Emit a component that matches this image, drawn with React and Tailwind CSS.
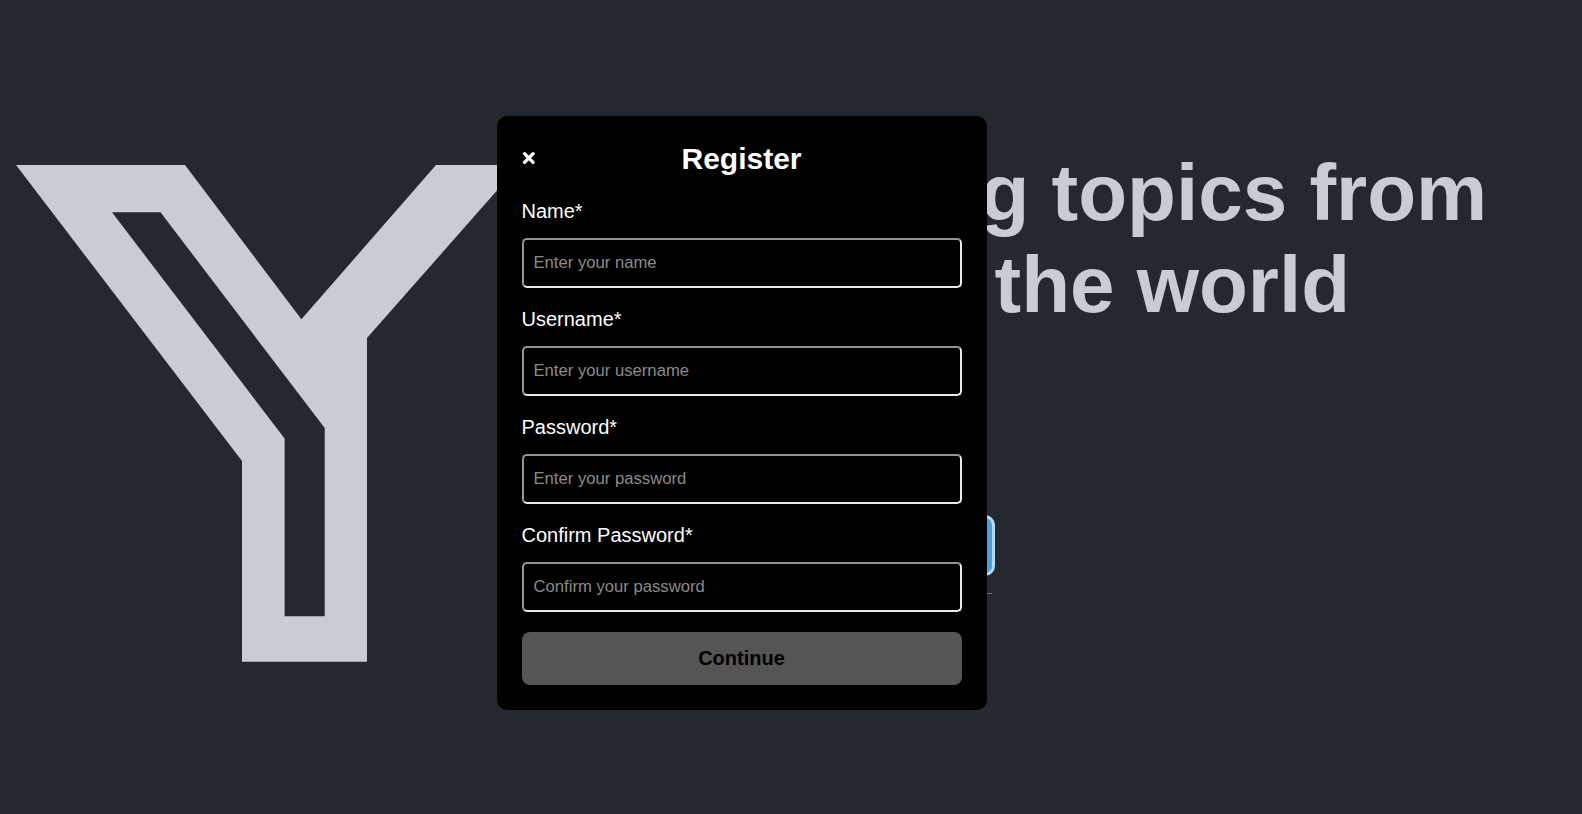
import React from "react";

const FIELDS = [
  { id: "name", label: "Name*", placeholder: "Enter your name", type: "text" },
  { id: "username", label: "Username*", placeholder: "Enter your username", type: "text" },
  { id: "password", label: "Password*", placeholder: "Enter your password", type: "password" },
  { id: "confirm", label: "Confirm Password*", placeholder: "Confirm your password", type: "password" },
];

function Logo() {
  return (
    <svg className="block h-[497px] w-[504px] shrink-0" viewBox="16 165 504 497" fill="#c8ccd5" aria-hidden="true">
      <path
        fillRule="evenodd"
        d="M16 165H185L301.4 319.3L436 165H519.5L367 338V661.7H242V461ZM112 212.3L284.6 438.5V616.3H324.7V428L160.5 212.3Z"
      />
    </svg>
  );
}

function Field({ id, label, placeholder, type }) {
  return (
    <div className="flex flex-col">
      <label htmlFor={id} className="mb-[15px] -ml-[0.5px] text-[20px] leading-[23px] text-white">
        {label}
      </label>
      <input
        id={id}
        type={type}
        placeholder={placeholder}
        className="h-[50px] w-full rounded-[5px] border-2 border-t-[#949494] border-r-[#ebebeb] border-b-[#ebebeb] border-l-[#949494] bg-black pr-[10px] pl-[9.5px] text-[16.6667px] text-white placeholder:text-[#8b8b8b]"
      />
    </div>
  );
}

function RegisterModal() {
  return (
    <form className="absolute top-[116px] left-[497px] flex h-[594px] w-[490px] flex-col rounded-[10px] bg-black p-[25px]">
      <div className="mb-[23px] flex h-[36px] items-center">
        <button type="button" aria-label="Close" className="flex w-[14px] justify-center pb-[2px]">
          <svg className="block h-[14px] w-[14px]" viewBox="0 0 14 14">
            <path
              d="M2.5 2.7L11.1 11.3M11.1 2.7L2.5 11.3"
              stroke="#fff"
              strokeWidth="3.3"
              strokeLinecap="round"
            />
          </svg>
        </button>
        <h2 className="mr-[15px] flex-1 text-center text-[30px] leading-[34px] font-bold text-white">Register</h2>
      </div>
      <div className="flex flex-col gap-[20px]">
        {FIELDS.map((f) => (
          <Field key={f.id} {...f} />
        ))}
        <button type="button" className="h-[53px] rounded-[8px] bg-[#555555] pr-px pb-[2px] text-[20px] font-bold text-black">
          Continue
        </button>
      </div>
    </form>
  );
}

export default function App() {
  return (
    <div className="relative h-[814px] w-full overflow-hidden bg-[#242930] font-['Liberation_Sans',Arial,sans-serif]">
      <main className="flex items-start pl-[16px]">
        <div className="pt-[165px]">
          <Logo />
        </div>
        <section className="ml-[460px] flex flex-col items-start pt-[147px]">
          <h1 className="pl-[0.5px] text-[80px] leading-[92px] font-bold whitespace-nowrap text-[#c8ccd3]">
            <span className="block">g topics from</span>
            <span className="block pl-[14px]">the world</span>
          </h1>
          <div className="mt-[184px] h-[61px] w-[15px] rounded-r-[10px] border-[3px] border-l-0 border-[#b3d9f8] bg-[#4a9fe0]" />
          <div className="mt-[17px] h-px w-[12px] bg-[#6f747c]" />
        </section>
      </main>
      <RegisterModal />
    </div>
  );
}
